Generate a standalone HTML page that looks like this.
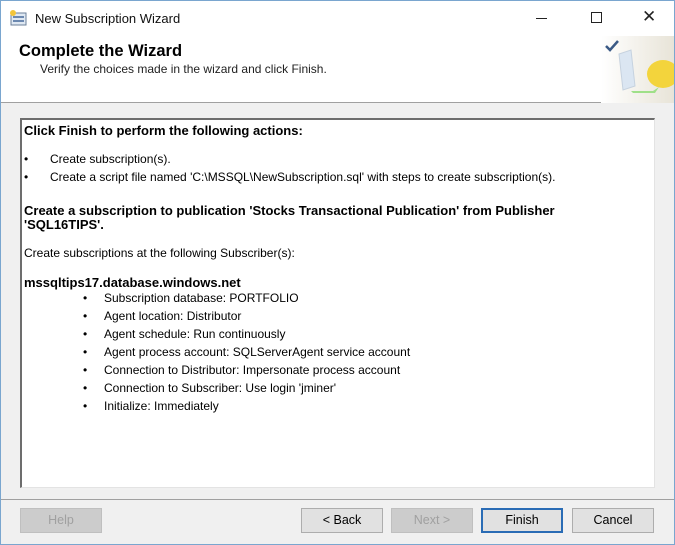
<!DOCTYPE html>
<html><head><style>
*{margin:0;padding:0;box-sizing:border-box}
body{width:675px;height:545px;overflow:hidden;background:#f0f0f0;font-family:"Liberation Sans",Arial,sans-serif;position:relative;color:#000}
.win{position:absolute;left:0;top:0;width:675px;height:545px;border:1px solid #7aa6cf;background:#f0f0f0}
.title{position:absolute;left:0;top:0;width:673px;height:35px;background:#fff;font-size:13px}
.hdr{position:absolute;left:0;top:35px;width:673px;height:67px;background:#fff;border-bottom:1px solid #a0a0a0}
.box{position:absolute;left:19px;top:117px;width:635px;height:370px;background:#fff;border-top:2px solid #6d6d6d;border-left:2px solid #6d6d6d;border-right:1px solid #e3e3e3;border-bottom:1px solid #e3e3e3;font-size:12px}
.t{position:absolute;white-space:nowrap}
.b{font-weight:bold;font-size:13px}
.btn{position:absolute;top:507px;height:25px;width:82px;border:1px solid #adadad;background:#e1e1e1;font-size:12.5px;text-align:center;line-height:23px}
.dis{color:#a0a0a0;background:#cccccc;border-color:#bfbfbf}
</style></head><body>
<div class="win">
<div class="title">
 <svg style="position:absolute;left:9px;top:9px" width="18" height="16"><rect x="1" y="3" width="15" height="12" fill="#dfe8f2" stroke="#6b7f99"/><rect x="3" y="6" width="11" height="2" fill="#6b88b0"/><rect x="3" y="10" width="11" height="2" fill="#6b88b0"/><circle cx="3" cy="3" r="3" fill="#f3c53a"/></svg>
 <div class="t" style="left:34px;top:10px;font-size:13px;color:#111">New Subscription Wizard</div>
 <div class="t" style="left:535px;top:17px;width:11px;height:1px;background:#222"></div>
 <div class="t" style="left:590px;top:11px;width:11px;height:11px;border:1px solid #222"></div>
 <div class="t" style="left:641px;top:6px;font-size:17px;color:#222">✕</div>
</div>
<div class="hdr">
 <div class="t" style="left:18px;top:6px;font-size:16.5px;font-weight:bold">Complete the Wizard</div>
 <div class="t" style="left:39px;top:26px;font-size:12px;color:#222">Verify the choices made in the wizard and click Finish.</div>
 <svg style="position:absolute;left:600px;top:0" width="73" height="67">
  <defs><linearGradient id="g" x1="0" x2="1"><stop offset="0" stop-color="#fff"/><stop offset="1" stop-color="#e8e4d8"/></linearGradient></defs>
  <rect width="73" height="67" fill="url(#g)"/>
  <path d="M5 10 l4 4 l8 -9" stroke="#3b5a86" stroke-width="2.5" fill="none"/>
  <path d="M18 18 l12 -4 l4 36 l-12 4z" fill="#dbe6f2" stroke="#c6d2df"/>
  <ellipse cx="62" cy="38" rx="16" ry="14" fill="#f3d43c"/>
  <path d="M30 55 h22 l6 -4 l-4 6 h-22z" fill="#9fe089"/>
 </svg>
</div>
<div class="box">
 <div class="t b" style="left:2px;top:3px">Click Finish to perform the following actions:</div>
 <div class="t" style="left:2px;top:32px">•</div><div class="t" style="left:28px;top:32px">Create subscription(s).</div>
 <div class="t" style="left:2px;top:50px">•</div><div class="t" style="left:28px;top:50px">Create a script file named 'C:\MSSQL\NewSubscription.sql' with steps to create subscription(s).</div>
 <div class="t b" style="left:2px;top:83px">Create a subscription to publication 'Stocks Transactional Publication' from Publisher</div>
 <div class="t b" style="left:2px;top:97px">'SQL16TIPS'.</div>
 <div class="t" style="left:2px;top:126px">Create subscriptions at the following Subscriber(s):</div>
 <div class="t b" style="left:2px;top:155px">mssqltips17.database.windows.net</div>
 <div class="t" style="left:61px;top:171px">•</div><div class="t" style="left:82px;top:171px">Subscription database: PORTFOLIO</div>
 <div class="t" style="left:61px;top:189px">•</div><div class="t" style="left:82px;top:189px">Agent location: Distributor</div>
 <div class="t" style="left:61px;top:207px">•</div><div class="t" style="left:82px;top:207px">Agent schedule: Run continuously</div>
 <div class="t" style="left:61px;top:225px">•</div><div class="t" style="left:82px;top:225px">Agent process account: SQLServerAgent service account</div>
 <div class="t" style="left:61px;top:243px">•</div><div class="t" style="left:82px;top:243px">Connection to Distributor: Impersonate process account</div>
 <div class="t" style="left:61px;top:261px">•</div><div class="t" style="left:82px;top:261px">Connection to Subscriber: Use login 'jminer'</div>
 <div class="t" style="left:61px;top:279px">•</div><div class="t" style="left:82px;top:279px">Initialize: Immediately</div>
</div>
<div style="position:absolute;left:0;top:498px;width:673px;height:1px;background:#a0a0a0"></div>
<div class="btn dis" style="left:19px">Help</div>
<div class="btn" style="left:300px">&lt; Back</div>
<div class="btn dis" style="left:390px">Next &gt;</div>
<div class="btn" style="left:480px;border:2px solid #2a6cb5;line-height:21px">Finish</div>
<div class="btn" style="left:571px">Cancel</div>
</div>
</body></html>
